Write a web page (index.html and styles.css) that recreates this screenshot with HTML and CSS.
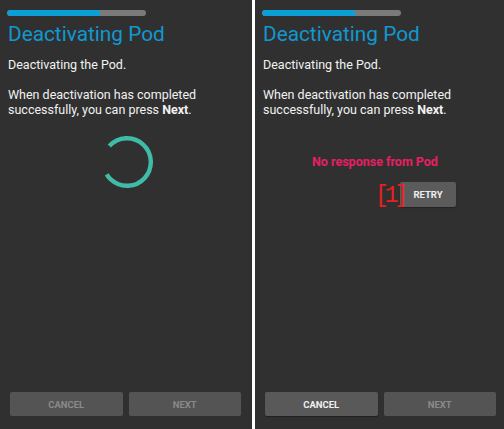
FILE: index.html
```html
<!DOCTYPE html>
<html>
<head>
<meta charset="utf-8">
<link rel="stylesheet" href="styles.css">
</head>
<body>
<div class="screens">
  <section class="panel">
    <div class="progress"><div class="progress-fill"></div></div>
    <h1 class="title">Deactivating Pod</h1>
    <p class="text">Deactivating the Pod.</p>
    <p class="text text-gap">When deactivation has completed<br>successfully, you can press <b>Next</b>.</p>
    <div class="spinner-wrap">
      <svg class="spinner" width="52" height="52" viewBox="0 0 52 52">
        <circle cx="26" cy="26" r="23.8" fill="none" stroke="#3fbba7" stroke-width="4.4" stroke-dasharray="118.4 31.1" transform="rotate(-138 26 26)"/>
      </svg>
    </div>
    <div class="spacer"></div>
    <div class="actions">
      <button class="btn btn-disabled">CANCEL</button>
      <button class="btn btn-disabled">NEXT</button>
    </div>
  </section>
  <section class="panel">
    <div class="progress"><div class="progress-fill"></div></div>
    <h1 class="title">Deactivating Pod</h1>
    <p class="text">Deactivating the Pod.</p>
    <p class="text text-gap">When deactivation has completed<br>successfully, you can press <b>Next</b>.</p>
    <p class="error">No response from Pod</p>
    <div class="retry-row">
      <button class="btn btn-retry">RETRY</button>
      <span class="tag">[1]</span>
    </div>
    <div class="spacer"></div>
    <div class="actions">
      <button class="btn btn-enabled">CANCEL</button>
      <button class="btn btn-disabled">NEXT</button>
    </div>
  </section>
</div>
</body>
</html>
```
FILE: styles.css
```css
html, body {
  margin: 0;
  padding: 0;
  background: #ffffff;
}
.screens {
  display: flex;
  gap: 3px;
  width: 504px;
  height: 429px;
  overflow: hidden;
}
.panel {
  flex: 0 0 252px;
  height: 429px;
  box-sizing: border-box;
  background: #303030;
  padding: 10px 11px 13px 8px;
  display: flex;
  flex-direction: column;
  font-family: Roboto, "Liberation Sans", sans-serif;
  color: #f2f2f2;
}
.progress {
  margin-left: -1px;
  width: 139px;
  height: 6px;
  border-radius: 3px;
  background: #7a7a7a;
  overflow: hidden;
}
.progress-fill {
  width: 93px;
  height: 100%;
  background: #0b9fd6;
  border-radius: 3px 0 0 3px;
}
.title {
  margin: 6px 0 0 0;
  font-size: 20.8px;
  line-height: 25px;
  font-weight: 400;
  color: #1198d0;
}
.text {
  margin: 10px 0 0 0;
  font-size: 12.5px;
  line-height: 15px;
}
.text-gap {
  margin-top: 15px;
}
.text b {
  font-weight: 700;
}
.spinner-wrap {
  margin-top: 19px;
  padding-left: 93px;
  display: flex;
}
.spacer {
  flex: 1;
}
.error {
  margin: 38px 0 0 49px;
  font-size: 12.5px;
  line-height: 14px;
  font-weight: 700;
  color: #e91e63;
}
.retry-row {
  position: relative;
  margin: 13px 0 0 137px;
  display: flex;
}
.btn {
  border: none;
  border-radius: 2px;
  font-family: Roboto, "Liberation Sans", sans-serif;
  font-weight: 700;
  font-size: 9.5px;
  padding: 0;
  height: 24px;
}
.btn-retry {
  width: 56px;
  height: 25px;
  background: #5b5b5b;
  color: #eeeeee;
  box-shadow: 0 1px 1px rgba(0,0,0,0.3);
}
.tag {
  position: absolute;
  left: -25px;
  top: 2px;
  font-family: "Liberation Mono", monospace;
  font-size: 23px;
  line-height: 24px;
  letter-spacing: -4px;
  color: #e8201e;
}
.actions {
  display: grid;
  grid-template-columns: 1fr 1fr;
  gap: 6px;
  margin-left: 2px;
}
.btn-disabled {
  background: #545454;
  color: #8a8a8a;
}
.btn-enabled {
  background: #595959;
  color: #f0f0f0;
  box-shadow: 0 1px 1px rgba(0,0,0,0.35);
}
```
